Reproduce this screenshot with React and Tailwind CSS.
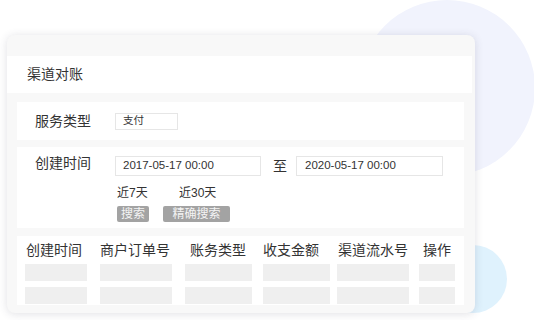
export default function App() {
  const cols = [
    { head: "创建时间", bar: "w-[62px]", hm: "ml-[1px]" },
    { head: "商户订单号", bar: "w-[72px]", hm: "ml-0" },
    { head: "账务类型", bar: "w-[67px]", hm: "ml-[5px]" },
    { head: "收支金额", bar: "w-[67px]", hm: "ml-0" },
    { head: "渠道流水号", bar: "w-[72px]", hm: "ml-[1px]" },
    { head: "操作", bar: "w-[36px]", hm: "ml-[4px]" },
  ];
  return (
    <div className="relative w-[534px] h-[320px] overflow-hidden bg-white pt-[35px] pl-[7px] font-['Liberation_Sans','Noto_Sans_CJK_SC',sans-serif] text-[#333]">
      <div className="absolute left-[359px] top-0 w-[176px] h-[176px] rounded-full bg-[#f1f3fd]" />
      <div className="absolute left-[439px] top-[245px] w-[68px] h-[68px] rounded-full bg-[#dff2fd]" />
      <div className="relative w-[468px] h-[278px] rounded-[8px] bg-[#f8f8f8] shadow-[0_1px_8px_rgba(60,60,90,0.16)] flex flex-col overflow-hidden">
        <div className="h-[21px] shrink-0" />
        <div className="h-[37px] shrink-0 mr-[3px] bg-white flex items-center pl-[20px] text-[14px]">
          渠道对账
        </div>
        <div className="mt-[9px] ml-[10px] w-[447px] h-[38px] shrink-0 bg-white flex items-center pl-[18px]">
          <div className="w-[80px] text-[14px] leading-[16px]">服务类型</div>
          <div className="w-[63px] h-[17px] border border-[#e6e6e6] flex items-center pl-[7px] text-[10.5px]">
            支付
          </div>
        </div>
        <div className="mt-[7px] ml-[10px] w-[447px] h-[81px] shrink-0 bg-white flex flex-col pt-[9px] pl-[18px]">
          <div className="flex items-start">
            <div className="w-[80px] text-[14px] leading-[14px]">创建时间</div>
            <div className="w-[146px] h-[20px] border border-[#e6e6e6] flex items-center pl-[7px] text-[11.5px]">
              2017-05-17 00:00
            </div>
            <div className="ml-[12px] text-[14px] leading-[20px]">至</div>
            <div className="ml-[9px] w-[147px] h-[20px] border border-[#e6e6e6] flex items-center pl-[8px] text-[11.5px]">
              2020-05-17 00:00
            </div>
          </div>
          <div className="flex mt-[10px] pl-[82px] text-[12px] leading-[14px]">
            <span className="w-[62px]">近7天</span>
            <span>近30天</span>
          </div>
          <div className="flex mt-[6px] pl-[82px] text-[12px] leading-[16px] text-[#f4f4f4]">
            <div className="w-[32px] h-[16px] rounded-[2px] bg-[#a3a3a3] flex items-center justify-center">搜索</div>
            <div className="ml-[14px] w-[67px] h-[16px] rounded-[2px] bg-[#a3a3a3] flex items-center justify-center">精确搜索</div>
          </div>
        </div>
        <div className="mt-[8px] ml-[10px] w-[447px] h-[69px] shrink-0 bg-white pt-[6px] pl-[8px] grid grid-cols-[75px_85px_78px_74px_82px_45px]">
          {cols.map((c) => (
            <div key={c.head} className="flex flex-col">
              <div className={`${c.hm} text-[14px] leading-[16px] whitespace-nowrap`}>{c.head}</div>
              <div className={`${c.bar} h-[17px] mt-[6px] bg-[#efefef]`} />
              <div className={`${c.bar} h-[17px] mt-[6px] bg-[#efefef]`} />
            </div>
          ))}
        </div>
      </div>
    </div>
  );
}
